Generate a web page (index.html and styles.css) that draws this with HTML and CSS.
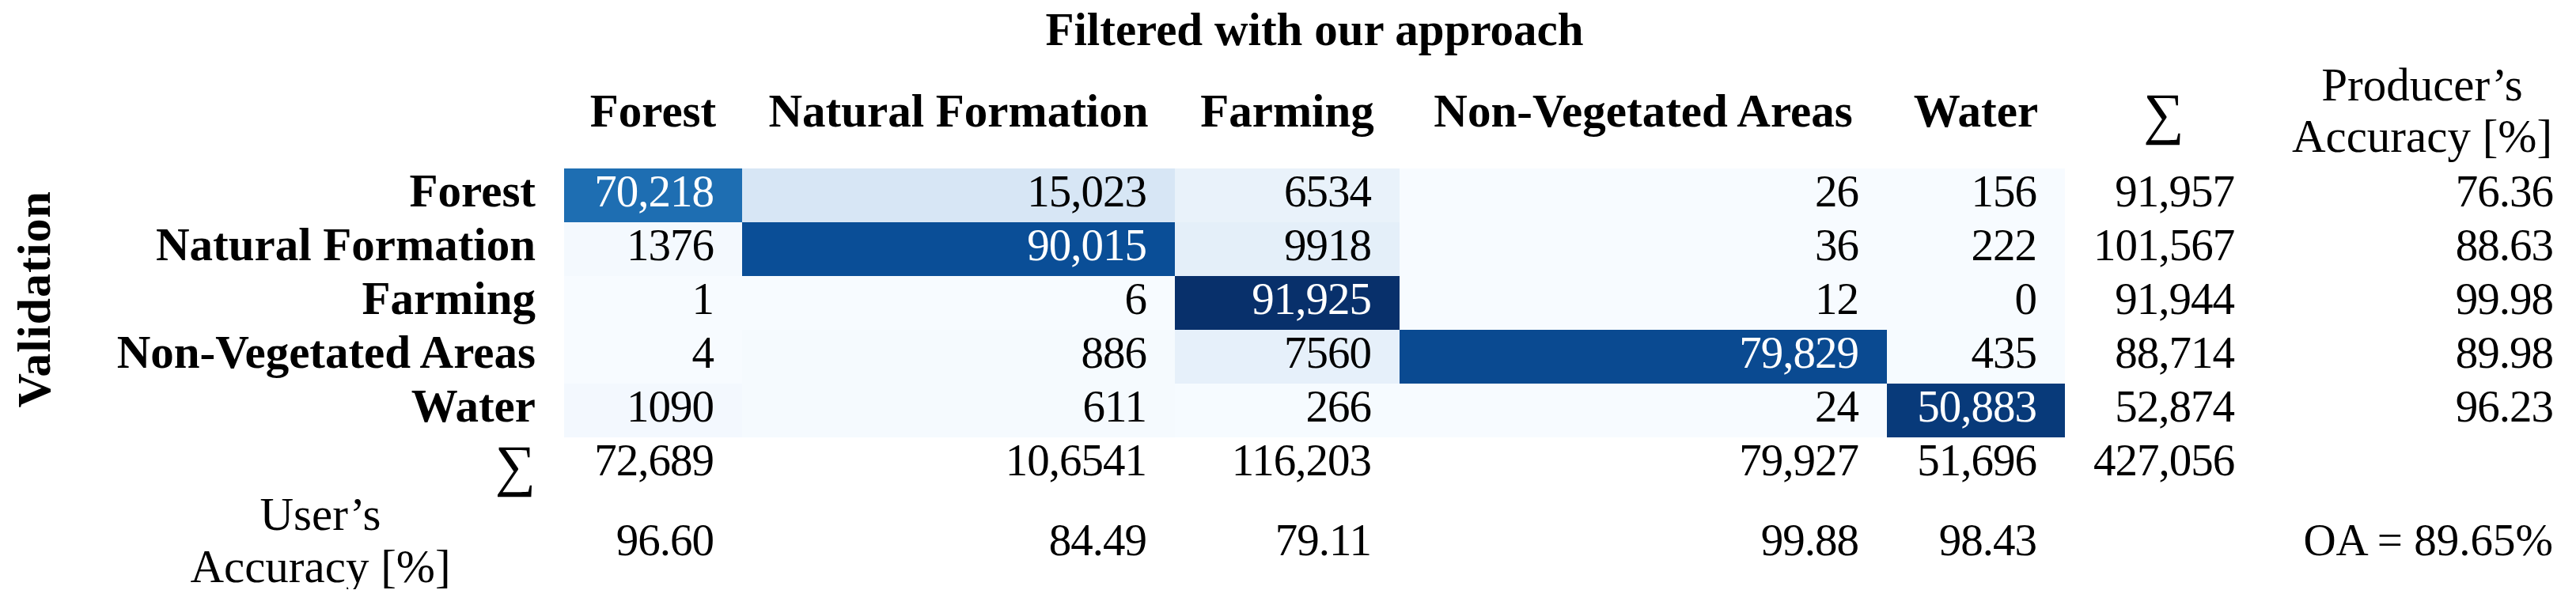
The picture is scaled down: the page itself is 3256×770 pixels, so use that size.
FILE: index.html
```html
<!DOCTYPE html>
<html lang="en">
<head>
<meta charset="utf-8">
<title>Confusion matrix</title>
<link rel="stylesheet" href="styles.css">
</head>
<body>
<div class="cm">
  <div class="fill-left"></div>
  <div class="title">Filtered with our approach</div>
  <div class="fill-right"></div>

  <div class="corner"></div>
  <div class="hd">Forest</div>
  <div class="hd">Natural Formation</div>
  <div class="hd">Farming</div>
  <div class="hd">Non-Vegetated Areas</div>
  <div class="hd">Water</div>
  <div class="hd sum-hd"><span class="sigma">∑</span></div>
  <div class="hd pa-hd">Producer’s<br>Accuracy [%]</div>

  <div class="axis"><span class="axis-text">Validation</span></div>

  <div class="rl">Forest</div>
  <div class="v dark" style="background:#1e6eb2">70,218</div>
  <div class="v" style="background:#d7e6f5">15,023</div>
  <div class="v" style="background:#e9f2fa">6534</div>
  <div class="v" style="background:#f7fbff">26</div>
  <div class="v" style="background:#f7fbff">156</div>
  <div class="t">91,957</div>
  <div class="t pa">76.36</div>

  <div class="rl">Natural Formation</div>
  <div class="v" style="background:#f4f9fe">1376</div>
  <div class="v dark" style="background:#0a4e97">90,015</div>
  <div class="v" style="background:#e4eff9">9918</div>
  <div class="v" style="background:#f7fbff">36</div>
  <div class="v" style="background:#f7fbff">222</div>
  <div class="t">101,567</div>
  <div class="t pa">88.63</div>

  <div class="rl">Farming</div>
  <div class="v" style="background:#f7fbff">1</div>
  <div class="v" style="background:#f7fbff">6</div>
  <div class="v dark" style="background:#08306b">91,925</div>
  <div class="v" style="background:#f7fbff">12</div>
  <div class="v" style="background:#f7fbff">0</div>
  <div class="t">91,944</div>
  <div class="t pa">99.98</div>

  <div class="rl">Non-Vegetated Areas</div>
  <div class="v" style="background:#f7fbff">4</div>
  <div class="v" style="background:#f5fafe">886</div>
  <div class="v" style="background:#e6f0fa">7560</div>
  <div class="v dark" style="background:#0a4a91">79,829</div>
  <div class="v" style="background:#f6fbff">435</div>
  <div class="t">88,714</div>
  <div class="t pa">89.98</div>

  <div class="rl">Water</div>
  <div class="v" style="background:#f3f8fe">1090</div>
  <div class="v" style="background:#f5fafe">611</div>
  <div class="v" style="background:#f6fbff">266</div>
  <div class="v" style="background:#f7fbff">24</div>
  <div class="v dark" style="background:#083a7a">50,883</div>
  <div class="t">52,874</div>
  <div class="t pa">96.23</div>

  <div class="blank"></div>
  <div class="rl sum-rl"><span class="sigma">∑</span></div>
  <div class="t">72,689</div>
  <div class="t">10,6541</div>
  <div class="t">116,203</div>
  <div class="t">79,927</div>
  <div class="t">51,696</div>
  <div class="t">427,056</div>
  <div class="t pa"></div>

  <div class="blank"></div>
  <div class="ua-label">User’s<br>Accuracy [%]</div>
  <div class="u">96.60</div>
  <div class="u">84.49</div>
  <div class="u">79.11</div>
  <div class="u">99.88</div>
  <div class="u">98.43</div>
  <div class="u"></div>
  <div class="u pa">OA = 89.65%</div>
</div>
</body>
</html>
```

FILE: styles.css
```css
html, body {
  margin: 0;
  padding: 0;
  background: #ffffff;
  overflow: hidden;
}

body {
  font-family: "Liberation Serif", "Times New Roman", serif;
  color: #000000;
}

.cm {
  display: grid;
  grid-template-columns: 97px 616px 225px 547px 284px 616px 225px 250px 396px;
  grid-template-rows: 71px 142px repeat(5, 68px) 68px 124px;
  width: 3256px;
}

.fill-left {
  grid-column: 1 / 3;
  grid-row: 1;
}

.fill-right {
  grid-column: 8 / 10;
  grid-row: 1;
}

.title {
  grid-column: 3 / 8;
  grid-row: 1;
  text-align: center;
  font-weight: bold;
  font-size: 59px;
  line-height: 65px;
  padding-top: 5px;
}

.corner {
  grid-column: 1 / 3;
  grid-row: 2;
}

.hd {
  grid-row: 2;
  display: flex;
  align-items: center;
  justify-content: center;
  padding: 0 36px 4px;
  font-weight: bold;
  font-size: 59px;
  line-height: 65px;
  white-space: nowrap;
}

.sum-hd {
  font-weight: normal;
  padding-top: 8px;
}

.pa-hd {
  font-weight: normal;
  text-align: center;
  padding-right: 29px;
}

.sigma {
  font-size: 72px;
  line-height: 1;
  display: inline-block;
}

.axis {
  grid-column: 1;
  grid-row: 3 / 8;
  display: flex;
  align-items: center;
  justify-content: center;
  padding-right: 11px;
  padding-bottom: 9px;
}

.axis-text {
  writing-mode: vertical-rl;
  transform: rotate(180deg);
  font-weight: bold;
  font-size: 60px;
  line-height: 66px;
  letter-spacing: 1px;
  white-space: nowrap;
}

.blank {
  grid-column: 1;
}

.rl {
  grid-column: 2;
  text-align: right;
  padding: 0 36px;
  font-weight: bold;
  font-size: 59px;
  line-height: 56px;
  white-space: nowrap;
}

.sum-rl {
  font-weight: normal;
}

.v, .t {
  text-align: right;
  padding: 0 36px;
  font-size: 57px;
  line-height: 58px;
  letter-spacing: -1px;
  white-space: nowrap;
}

.v.dark {
  color: #ffffff;
}

.pa {
  padding-right: 29px;
}

.ua-label {
  grid-column: 2;
  display: flex;
  align-items: center;
  justify-content: center;
  text-align: center;
  padding: 0 36px;
  font-size: 59px;
  line-height: 66px;
}

.u {
  display: flex;
  align-items: center;
  justify-content: flex-end;
  padding: 0 36px;
  font-size: 57px;
  line-height: 66px;
  letter-spacing: -1px;
  white-space: nowrap;
}

.u.pa {
  padding-right: 29px;
  letter-spacing: 0;
}
```
